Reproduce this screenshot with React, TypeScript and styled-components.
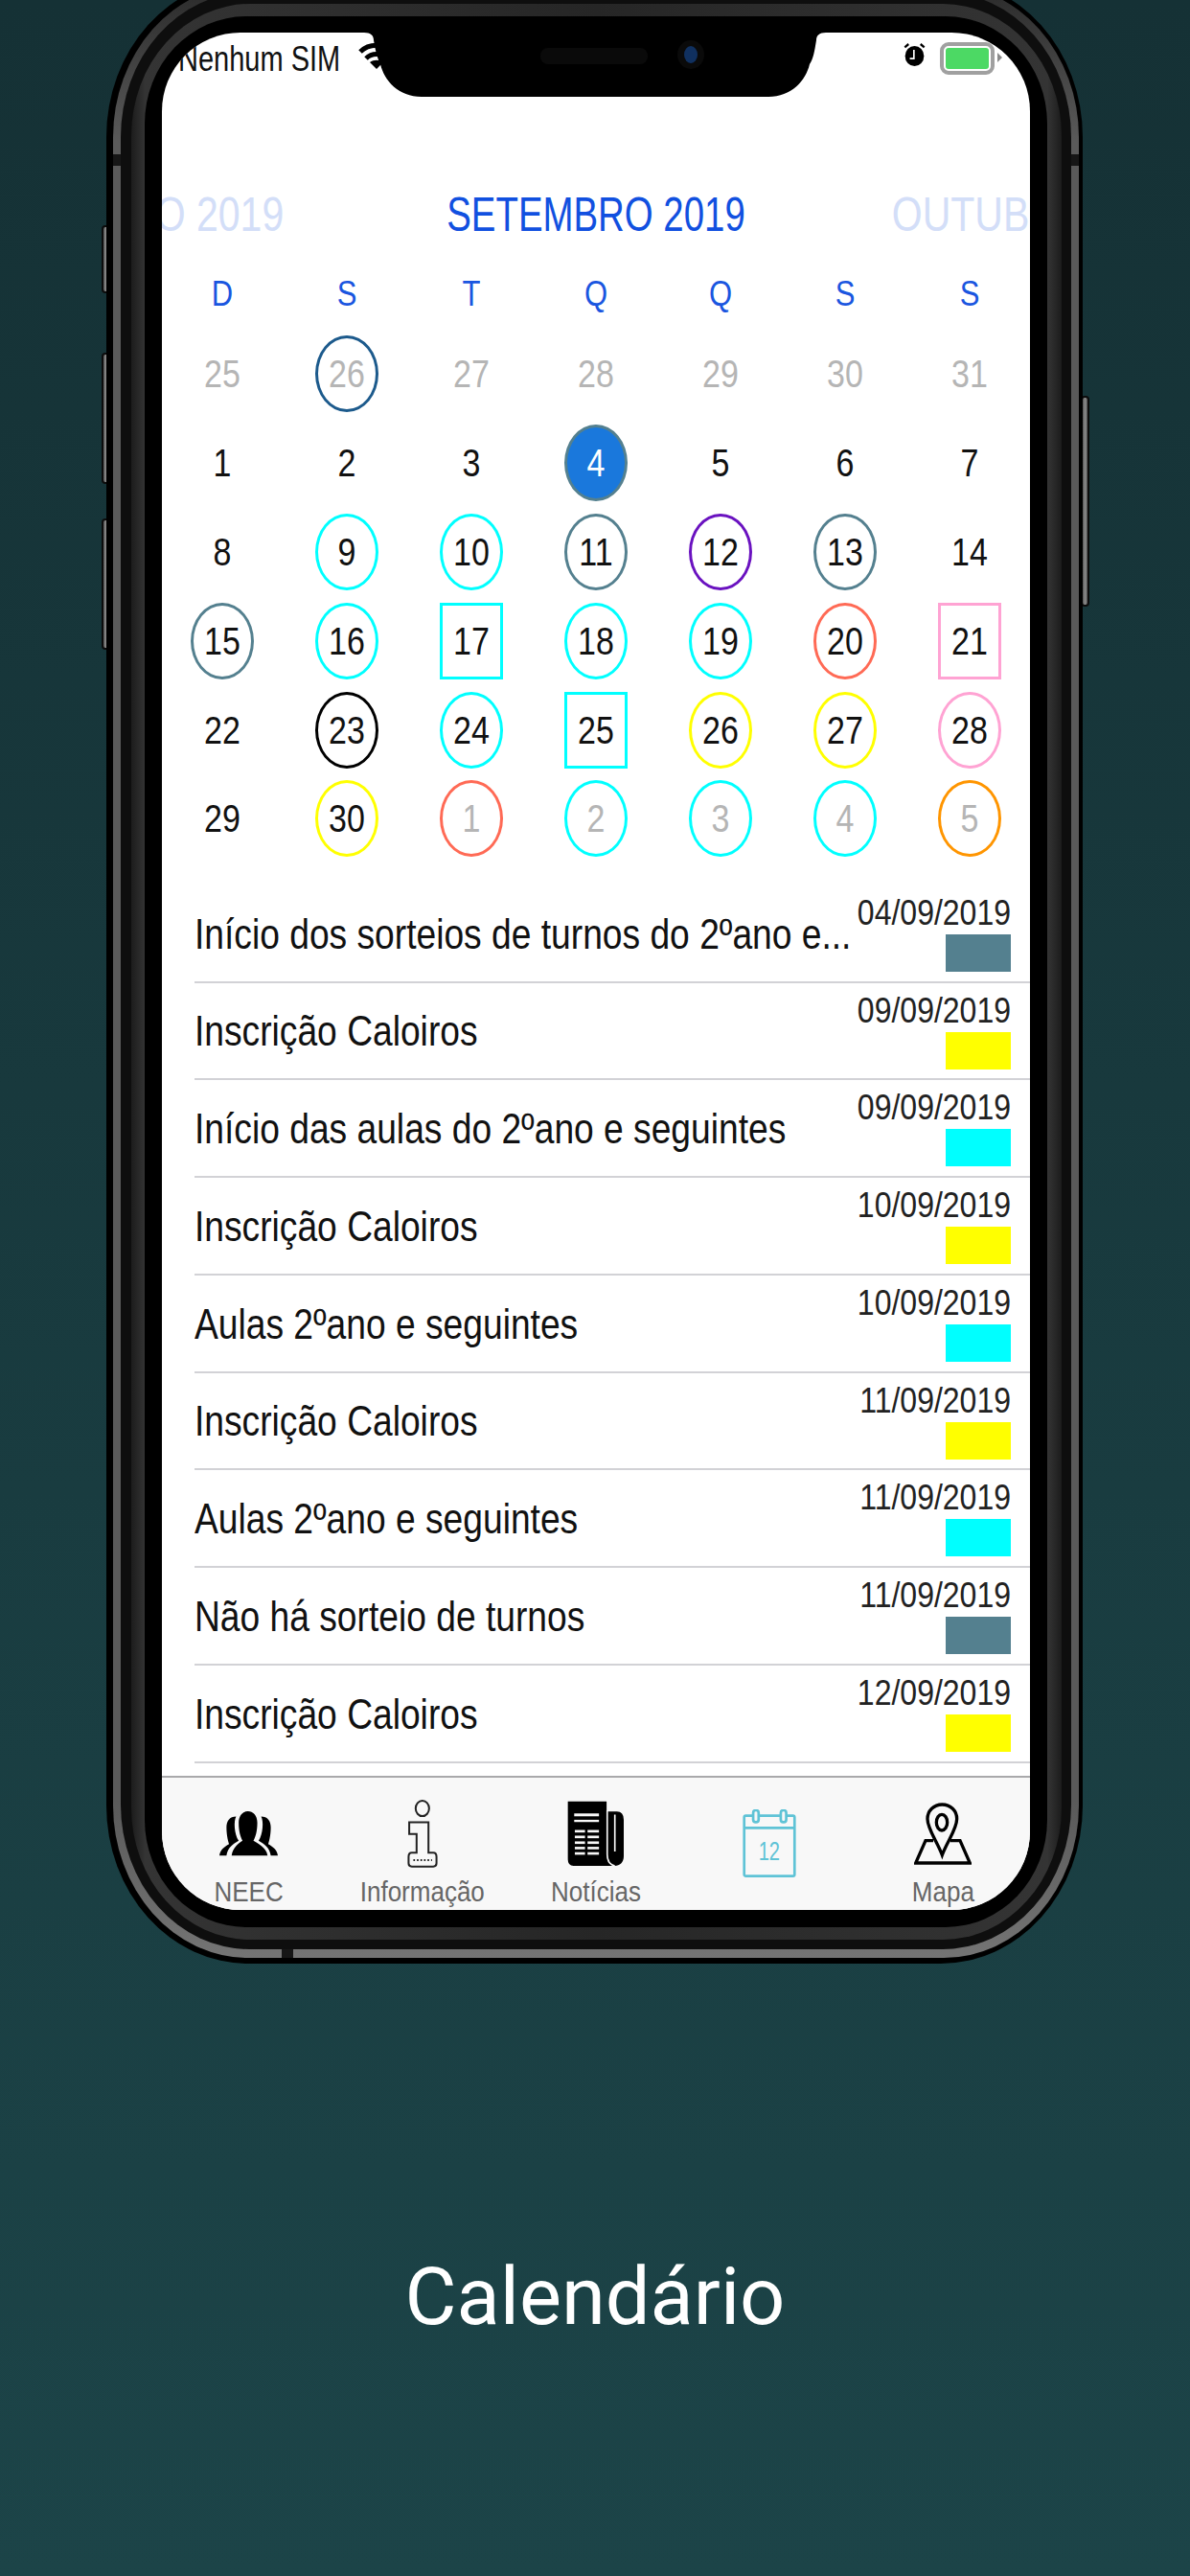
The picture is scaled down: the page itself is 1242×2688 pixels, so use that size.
import React from 'react';
import styled, { createGlobalStyle } from 'styled-components';

const CYAN = '#00ffff';
const SLATE = '#54808f';
const YELLOW = '#ffff00';
const CORAL = '#ff6a55';
const PINK = '#ffa3d3';
const PURPLE = '#6a12c0';
const NAVY = '#1c5a8c';
const ORANGE = '#ff9500';

type Day = { n: number; muted?: boolean; color?: string; square?: boolean; selected?: boolean };

const DAYS: Day[] = [
  { n: 25, muted: true }, { n: 26, muted: true, color: NAVY }, { n: 27, muted: true }, { n: 28, muted: true },
  { n: 29, muted: true }, { n: 30, muted: true }, { n: 31, muted: true },
  { n: 1 }, { n: 2 }, { n: 3 }, { n: 4, selected: true }, { n: 5 }, { n: 6 }, { n: 7 },
  { n: 8 }, { n: 9, color: CYAN }, { n: 10, color: CYAN }, { n: 11, color: SLATE }, { n: 12, color: PURPLE },
  { n: 13, color: SLATE }, { n: 14 },
  { n: 15, color: SLATE }, { n: 16, color: CYAN }, { n: 17, color: CYAN, square: true }, { n: 18, color: CYAN },
  { n: 19, color: CYAN }, { n: 20, color: CORAL }, { n: 21, color: PINK, square: true },
  { n: 22 }, { n: 23, color: '#000' }, { n: 24, color: CYAN }, { n: 25, color: CYAN, square: true },
  { n: 26, color: YELLOW }, { n: 27, color: YELLOW }, { n: 28, color: PINK },
  { n: 29 }, { n: 30, color: YELLOW }, { n: 1, muted: true, color: CORAL }, { n: 2, muted: true, color: CYAN },
  { n: 3, muted: true, color: CYAN }, { n: 4, muted: true, color: CYAN }, { n: 5, muted: true, color: ORANGE },
];

const EVENTS = [
  { title: 'Início dos sorteios de turnos do 2ºano e...', date: '04/09/2019', color: SLATE },
  { title: 'Inscrição Caloiros', date: '09/09/2019', color: YELLOW },
  { title: 'Início das aulas do 2ºano e seguintes', date: '09/09/2019', color: CYAN },
  { title: 'Inscrição Caloiros', date: '10/09/2019', color: YELLOW },
  { title: 'Aulas 2ºano e seguintes', date: '10/09/2019', color: CYAN },
  { title: 'Inscrição Caloiros', date: '11/09/2019', color: YELLOW },
  { title: 'Aulas 2ºano e seguintes', date: '11/09/2019', color: CYAN },
  { title: 'Não há sorteio de turnos', date: '11/09/2019', color: SLATE },
  { title: 'Inscrição Caloiros', date: '12/09/2019', color: YELLOW },
  { title: 'Inscrição Caloiros', date: '12/09/2019', color: CYAN },
];

const PeopleIcon = () => (
  <svg width="61" height="47" viewBox="0 0 182 140">
    <path d="M38 138C42 112 60 100 72 92C66 80 60 64 60 36C60 12 74 0 89 0C104 0 118 12 118 36C118 64 112 80 106 92C118 100 146 112 150 138Z" />
    <path d="M0 138C2 120 16 110 30 102C26 90 22 70 22 50C22 30 32 16 52 16C44 30 46 70 60 92C44 102 26 112 22 138Z" />
    <path d="M182 138C180 120 166 110 152 102C156 90 160 70 160 50C160 30 150 16 130 16C138 30 136 70 122 92C138 102 156 112 160 138Z" />
  </svg>
);

const InfoIcon = () => (
  <svg width="32" height="71" viewBox="0 0 93 212" fill="none" stroke="#222" strokeWidth="6">
    <ellipse cx="46" cy="27" rx="21" ry="24" />
    <path d="M5 70H65V165H80Q90 165 90 178V198Q90 208 80 208H13Q3 208 3 198V178Q3 165 13 165H28V107H5Z" />
    <path d="M18 188H76" strokeWidth="6" strokeDasharray="5 6" />
  </svg>
);

const NewsIcon = () => (
  <svg width="59" height="68" viewBox="0 0 178 205">
    <path d="M132 34H150Q178 30 178 60V175C178 195 165 205 150 205H20Q2 205 2 185V2H124V34Z" />
    <path d="M150 44V160M126 30V170C126 190 135 202 150 205" stroke="#f8f8f8" strokeWidth="5" fill="none" />
    <g fill="#f8f8f8">
      <rect x="22" y="40" width="78" height="9" />
      <rect x="22" y="60" width="78" height="7" />
      {[92, 110, 128, 145, 162].map((y) => (
        <React.Fragment key={y}>
          <rect x="24" y={y} width="32" height="8" />
          <rect x="64" y={y} width="36" height="8" />
        </React.Fragment>
      ))}
    </g>
  </svg>
);

const CalendarIcon = () => (
  <svg width="56" height="71" viewBox="0 0 165 212" fill="none" stroke="#5fc3d6" strokeWidth="8">
    <rect x="4" y="20" width="157" height="188" rx="5" />
    <path d="M4 58H161" />
    <rect x="32" y="3" width="17" height="37" rx="8" fill="#f8f8f8" />
    <rect x="118" y="3" width="17" height="37" rx="8" fill="#f8f8f8" />
    <text
      x="82"
      y="157"
      transform="translate(0 -52) scale(1 1.33)"
      textAnchor="middle"
      fontFamily="'Liberation Sans', sans-serif"
      fontSize="60"
      fill="#5fc3d6"
      stroke="none"
    >
      12
    </text>
  </svg>
);

const MapIcon = () => (
  <svg width="60" height="65" viewBox="0 0 180 193" fill="none" stroke="#000" strokeWidth="10">
    <path d="M88 5C62 5 42 24 42 50C42 82 72 120 88 163C104 120 134 82 134 50C134 24 114 5 88 5Z" />
    <ellipse cx="87" cy="61" rx="17" ry="25" />
    <path d="M60 118H36L5 188H175L144 118H114" />
  </svg>
);

const TABS = [
  { label: 'NEEC', icon: <PeopleIcon /> },
  { label: 'Informação', icon: <InfoIcon /> },
  { label: 'Notícias', icon: <NewsIcon /> },
  { label: '', icon: <CalendarIcon /> },
  { label: 'Mapa', icon: <MapIcon /> },
];

const App: React.FC = () => {
  return (
    <Page>
      <GlobalStyle />
      <Device>
        <SideButton $side="left" $top={257} $height={71} />
        <SideButton $side="left" $top={390} $height={137} />
        <SideButton $side="left" $top={563} $height={137} />
        <SideButton $side="right" $top={435} $height={220} />
        <FrameOuter>
          <FrameBand>
            <FrameDark>
              <FrameInner>
                <Bezel>
                  <Screen>
                    <Notch viewBox="0 0 494 68" width="494" height="68">
                      <path d="M6 0C13 0 16 3 16 8C18 20 20 27 23 33C27 50 42 67 66 67H428C452 67 467 50 471 33C475 27 476 20 478 8C478 3 481 0 488 0Z" />
                      <rect x="190" y="16" width="112" height="17" rx="8" fill="#0a0a0a" />
                      <ellipse cx="347" cy="23" rx="14" ry="15" fill="#0a0a0a" />
                      <ellipse cx="347" cy="23" rx="7" ry="9" fill="#10305f" />
                    </Notch>
                    <StatusBar>
                      <StatusLeft>
                        <Carrier>Nenhum SIM</Carrier>
                        <svg width="40" height="29" viewBox="0 0 40 29" fill="none" stroke="#000" strokeWidth="5">
                          <path d="M3 10C12 1 28 1 37 10" />
                          <path d="M9 17C15 11 25 11 31 17" />
                          <path d="M20 28L13 21C17 18 23 18 27 21Z" fill="#000" stroke="none" />
                        </svg>
                      </StatusLeft>
                      <StatusRight>
                        <svg width="23" height="26" viewBox="0 0 70 75">
                          <ellipse cx="35" cy="42" rx="30" ry="32" />
                          <path d="M33 22V50H20" stroke="#fff" strokeWidth="5" fill="none" />
                          <path d="M4 14L16 4M66 14L54 4" stroke="#000" strokeWidth="7" />
                        </svg>
                        <Battery>
                          <BatteryFill />
                        </Battery>
                      </StatusRight>
                    </StatusBar>

                    <MonthRow>
                      <MonthCell $align="end">
                        <MonthLabel $faded>AGOSTO 2019</MonthLabel>
                      </MonthCell>
                      <MonthLabel>SETEMBRO 2019</MonthLabel>
                      <MonthCell $align="start">
                        <MonthLabel $faded>OUTUBRO 2019</MonthLabel>
                      </MonthCell>
                    </MonthRow>

                    <WeekRow>
                      {['D', 'S', 'T', 'Q', 'Q', 'S', 'S'].map((d, i) => (
                        <WeekDay key={i}>{d}</WeekDay>
                      ))}
                    </WeekRow>

                    <DayGrid>
                      {DAYS.map((day, i) => (
                        <DayCell key={i}>
                          <DayMark $color={day.color} $square={day.square} $selected={day.selected}>
                            <DayNumber $muted={day.muted} $selected={day.selected}>
                              {day.n}
                            </DayNumber>
                          </DayMark>
                        </DayCell>
                      ))}
                    </DayGrid>

                    <EventList>
                      {EVENTS.map((ev, i) => (
                        <EventRow key={i}>
                          <EventTitle>{ev.title}</EventTitle>
                          <EventMeta>
                            <EventDate>{ev.date}</EventDate>
                            <Swatch $color={ev.color} />
                          </EventMeta>
                        </EventRow>
                      ))}
                    </EventList>

                    <TabBar>
                      {TABS.map((tab, i) => (
                        <Tab key={i}>
                          <TabIcon $low={!tab.label}>{tab.icon}</TabIcon>
                          {tab.label && <TabLabel>{tab.label}</TabLabel>}
                        </Tab>
                      ))}
                    </TabBar>
                  </Screen>
                </Bezel>
              </FrameInner>
            </FrameDark>
          </FrameBand>
        </FrameOuter>
        <AntennaBreak $place="left" />
        <AntennaBreak $place="right" />
        <AntennaBreak $place="bottom" />
      </Device>
      <Caption>Calendário</Caption>
    </Page>
  );
};

const GlobalStyle = createGlobalStyle`
  html, body {
    margin: 0;
    padding: 0;
    background: #1b4246;
  }
  * {
    box-sizing: border-box;
  }
`;

const Page = styled.main`
  width: 1242px;
  height: 2688px;
  overflow: hidden;
  display: flex;
  flex-direction: column;
  background: linear-gradient(180deg, #153135 0%, #1c4448 100%);
  font-family: 'Liberation Sans', Arial, sans-serif;
`;

const Device = styled.div`
  position: relative;
  flex-shrink: 0;
  width: 1019px;
  height: 2071px;
  margin: -22px 0 0 111px;
`;

const SideButton = styled.div<{ $side: 'left' | 'right'; $top: number; $height: number }>`
  position: absolute;
  ${(p) => (p.$side === 'left' ? 'left: -5px;' : 'right: -7px;')}
  top: ${(p) => p.$top}px;
  width: 9px;
  height: ${(p) => p.$height}px;
  border: 2px solid #0c0c0c;
  border-radius: 4px;
  background: linear-gradient(90deg, #555, #8a8a8a, #555);
`;

const AntennaBreak = styled.div<{ $place: 'left' | 'right' | 'bottom' }>`
  position: absolute;
  background: #161616;
  ${(p) =>
    p.$place === 'bottom'
      ? 'left: 183px; bottom: 6px; width: 12px; height: 9px;'
      : `${p.$place}: ${p.$place === 'left' ? 7 : 4}px; top: 183px; width: 8px; height: 12px;`}
`;

const FrameOuter = styled.div`
  position: relative;
  height: 100%;
  padding: 6px 4px 6px 7px;
  background: #000;
  border-radius: 148px / 165px;
`;

const FrameBand = styled.div`
  height: 100%;
  padding: 8px 8px 9px 8px;
  background: linear-gradient(180deg, #2a2a2a 0%, #5a5a5a 8%, #5a5a5a 92%, #747474 100%);
  border-radius: 141px / 159px;
`;

const FrameDark = styled.div`
  height: 100%;
  padding: 12px 10px 10px 11px;
  background: #0e0e0e;
  border-radius: 134px / 151px;
`;

const FrameInner = styled.div`
  height: 100%;
  padding: 13px 15px 13px 14px;
  background: linear-gradient(90deg, #1c1c1c 0%, #343434 1.5%, #262626 50%, #343434 98.5%, #1c1c1c 100%);
  border-radius: 124px / 138px;
`;

const Bezel = styled.div`
  height: 100%;
  padding: 17px 18px 18px 18px;
  background: #000;
  border-radius: 106px / 112px;
`;

const Screen = styled.div`
  position: relative;
  display: flex;
  flex-direction: column;
  height: 100%;
  overflow: hidden;
  background: #fff;
  border-radius: 82px / 82px;
`;

const Notch = styled.svg`
  position: absolute;
  top: 0;
  left: 205px;
  z-index: 2;
`;

const StatusBar = styled.div`
  display: flex;
  justify-content: space-between;
  flex-shrink: 0;
  height: 60px;
  padding: 10px 37px 0 17px;
`;

const StatusLeft = styled.div`
  display: flex;
  align-items: flex-start;
  gap: 18px;
`;

const Carrier = styled.span`
  display: inline-block;
  font-size: 29px;
  line-height: 34px;
  color: #111;
  transform: scaleY(1.25);
  white-space: nowrap;
`;

const StatusRight = styled.div`
  display: flex;
  align-items: flex-start;
  gap: 15px;
`;

const Battery = styled.div`
  position: relative;
  width: 57px;
  height: 34px;
  padding: 2px;
  border: 4px solid #a0a0a0;
  border-radius: 9px;

  &::after {
    content: '';
    position: absolute;
    top: 7px;
    right: -12px;
    border-left: 5px solid #8a8a8a;
    border-top: 5px solid transparent;
    border-bottom: 5px solid transparent;
  }
`;

const BatteryFill = styled.div`
  height: 100%;
  background: #4cd964;
  border-radius: 3px;
`;

const MonthRow = styled.div`
  display: grid;
  grid-template-columns: 1fr auto 1fr;
  align-items: center;
  flex-shrink: 0;
  height: 60px;
  margin-top: 100px;
`;

const MonthCell = styled.div<{ $align: 'start' | 'end' }>`
  display: flex;
  min-width: 0;
  overflow: hidden;
  justify-content: ${(p) => (p.$align === 'end' ? 'flex-end' : 'flex-start')};
  ${(p) => (p.$align === 'end' ? 'padding-right: 170px;' : 'padding-left: 153px;')}
`;

const MonthLabel = styled.span<{ $faded?: boolean }>`
  display: inline-block;
  flex-shrink: 0;
  font-size: ${(p) => (p.$faded ? '41px' : '38.4px')};
  line-height: 60px;
  white-space: nowrap;
  color: ${(p) => (p.$faded ? '#d3def8' : '#1150e0')};
  transform: scaleY(${(p) => (p.$faded ? 1.22 : 1.3)});
`;

const WeekRow = styled.div`
  display: grid;
  grid-template-columns: repeat(7, 130px);
  justify-content: center;
  flex-shrink: 0;
  height: 50px;
  margin-top: 28px;
`;

const WeekDay = styled.span`
  font-size: 31px;
  line-height: 50px;
  text-align: center;
  color: #1a56e0;
  transform: scaleY(1.2);
`;

const DayGrid = styled.div`
  display: grid;
  grid-template-columns: repeat(7, 130px);
  grid-auto-rows: 92.8px;
  justify-content: center;
  flex-shrink: 0;
  margin-top: 12px;
`;

const DayCell = styled.div`
  display: flex;
  align-items: center;
  justify-content: center;
`;

const DayMark = styled.div<{ $color?: string; $square?: boolean; $selected?: boolean }>`
  display: flex;
  align-items: center;
  justify-content: center;
  width: 66px;
  height: 80px;
  border-radius: ${(p) => (p.$square ? '0' : '50%')};
  border: 3px solid ${(p) => (p.$selected ? SLATE : p.$color || 'transparent')};
  background: ${(p) => (p.$selected ? '#1a78dc' : 'transparent')};
`;

const DayNumber = styled.span<{ $muted?: boolean; $selected?: boolean }>`
  display: inline-block;
  font-size: 34px;
  line-height: 40px;
  color: ${(p) => (p.$selected ? '#fff' : p.$muted ? '#b5b5b5' : '#111')};
  transform: scaleY(1.18);
`;

const EventList = styled.div`
  flex: 1;
  min-height: 0;
  margin-top: 23px;
  overflow: hidden;
`;

const EventRow = styled.div`
  display: flex;
  justify-content: space-between;
  align-items: center;
  height: 101.75px;
  margin-left: 34px;
  padding-right: 20px;
  border-bottom: 2px solid #d2d2d6;
`;

const EventTitle = styled.span`
  display: inline-block;
  font-size: 37.2px;
  line-height: 44px;
  color: #111;
  white-space: nowrap;
  transform: scaleY(1.2);
`;

const EventMeta = styled.div`
  display: flex;
  flex-direction: column;
  align-items: flex-end;
  align-self: flex-start;
  padding-top: 9px;
`;

const EventDate = styled.span`
  display: inline-block;
  font-size: 32px;
  line-height: 38px;
  color: #222;
  transform: scaleY(1.14);
`;

const Swatch = styled.div<{ $color: string }>`
  width: 68px;
  height: 39px;
  margin-top: 4px;
  background: ${(p) => p.$color};
`;

const TabBar = styled.nav`
  display: grid;
  grid-template-columns: repeat(5, 1fr);
  flex-shrink: 0;
  height: 140px;
  background: #f8f8f8;
  border-top: 2px solid #a9a9ab;
`;

const Tab = styled.div`
  display: flex;
  flex-direction: column;
  align-items: center;
`;

const TabIcon = styled.div<{ $low?: boolean }>`
  display: flex;
  align-items: center;
  justify-content: center;
  height: 72px;
  margin-top: ${(p) => (p.$low ? '32px' : '22px')};

  svg {
    display: block;
  }
`;

const TabLabel = styled.span`
  display: inline-block;
  margin-top: 9px;
  font-size: 26px;
  line-height: 32px;
  color: #666;
  white-space: nowrap;
  transform: scaleY(1.12);
`;

const Caption = styled.h1`
  margin: 298px 0 0;
  font-family: Roboto, sans-serif;
  font-size: 83px;
  font-weight: 400;
  line-height: 100px;
  text-align: center;
  color: #fff;
`;

export default App;
